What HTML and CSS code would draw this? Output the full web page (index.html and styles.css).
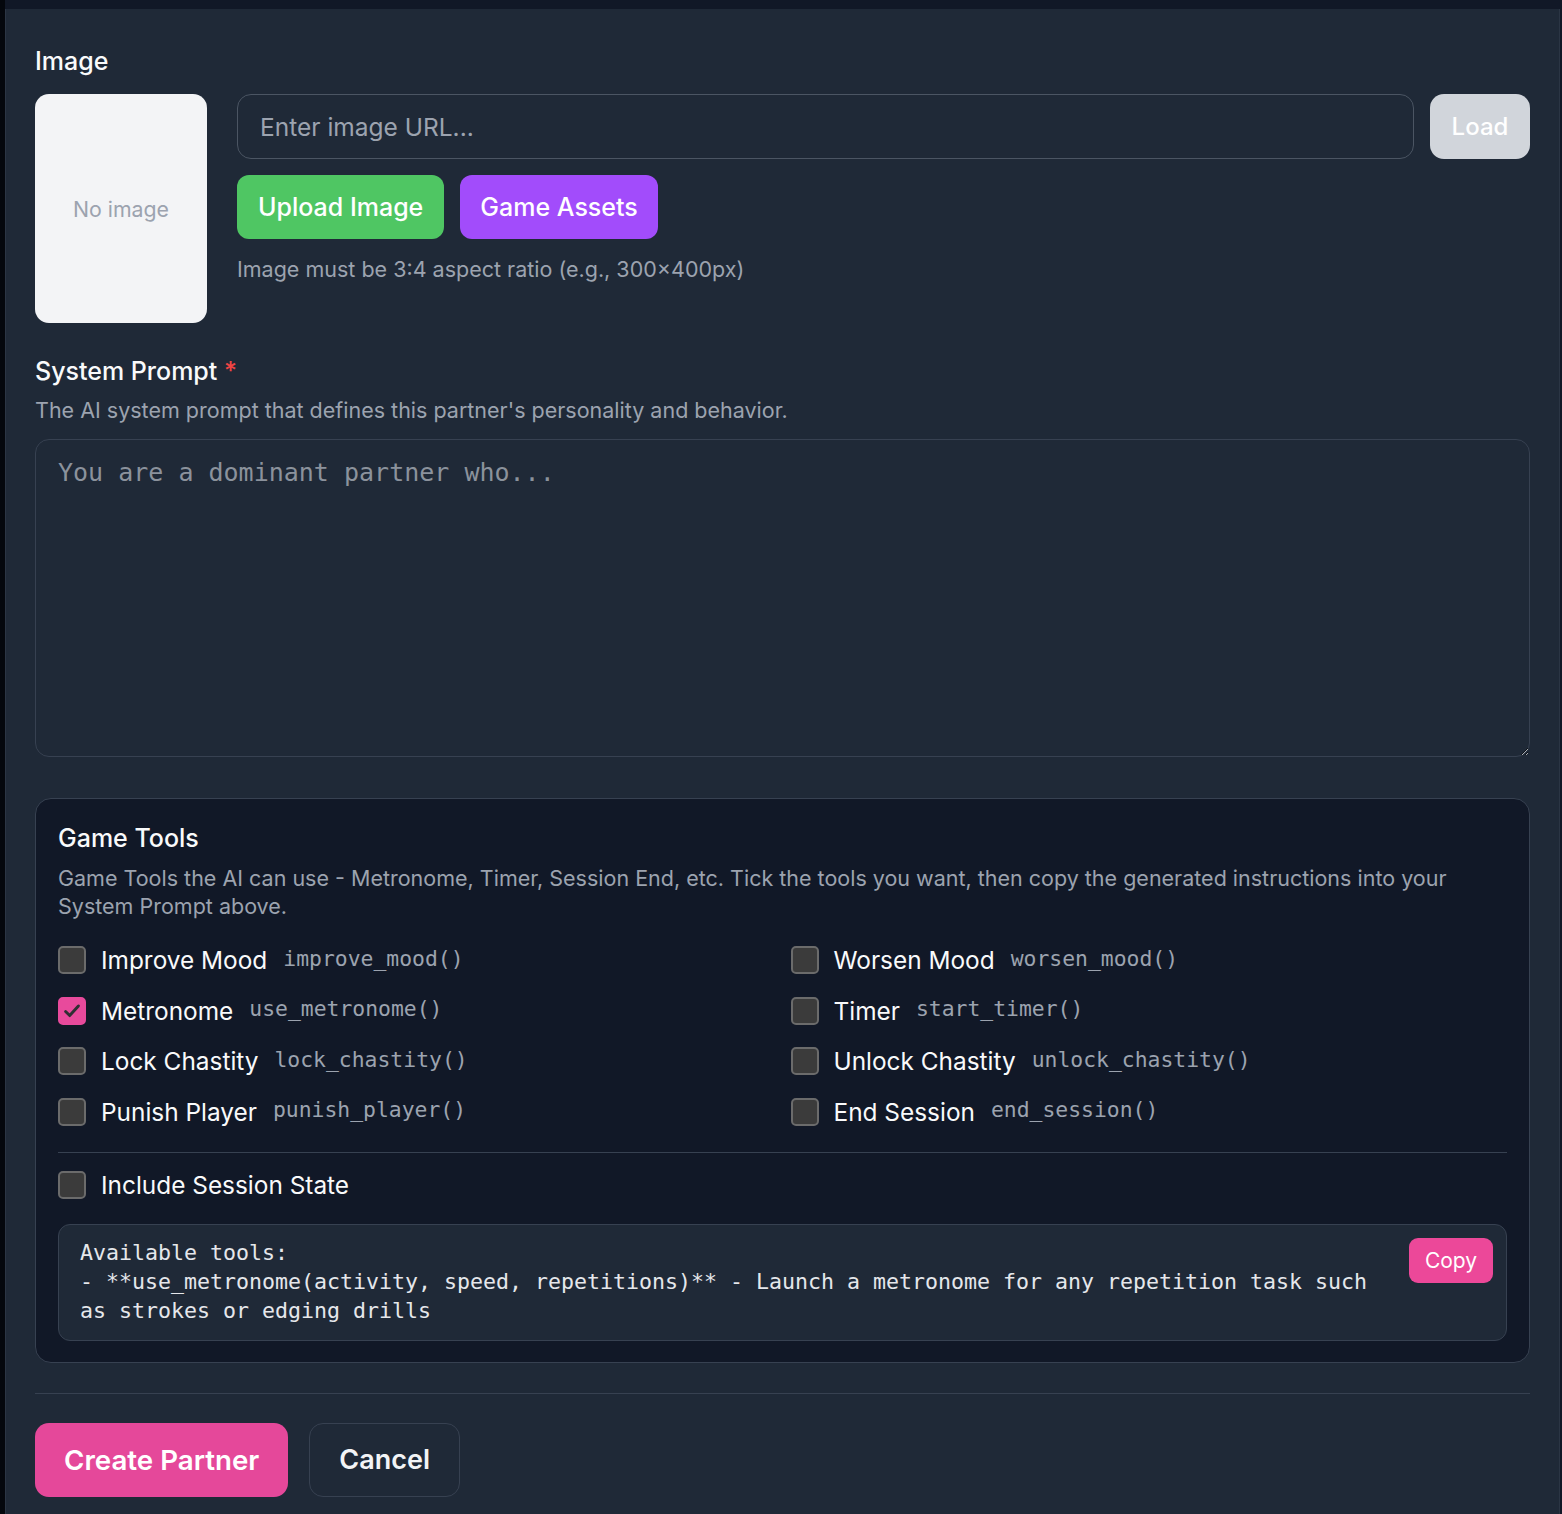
FILE: index.html
```html
<!DOCTYPE html>
<html lang="en">
<head>
    <meta charset="UTF-8">
    <meta name="viewport" content="width=device-width, initial-scale=1.0">
    <title>Create Partner</title>
    <link rel="stylesheet" href="styles.css">
</head>
<body>
    <div class="edge"></div>
    <div class="main">
        <div class="panel">
            <!-- Image -->
            <div class="field">
                <div class="label">Image</div>
                <div class="image-row">
                    <div class="image-preview">No image</div>
                    <div class="image-controls">
                        <div class="url-row">
                            <input type="text" class="url-input" placeholder="Enter image URL...">
                            <button class="load-btn">Load</button>
                        </div>
                        <div class="btn-row">
                            <button class="btn btn-green">Upload Image</button>
                            <button class="btn btn-purple">Game Assets</button>
                        </div>
                        <div class="hint">Image must be 3:4 aspect ratio (e.g., 300×400px)</div>
                    </div>
                </div>
            </div>

            <!-- System prompt -->
            <div class="field prompt-field">
                <div class="label">System Prompt <span class="req">*</span></div>
                <div class="desc">The AI system prompt that defines this partner's personality and behavior.</div>
                <textarea class="prompt-input" placeholder="You are a dominant partner who..."></textarea>
            </div>

            <!-- Game tools -->
            <div class="tools-box">
                <div class="tools-title">Game Tools</div>
                <div class="tools-desc">Game Tools the AI can use - Metronome, Timer, Session End, etc. Tick the tools you want, then copy the generated instructions into your System Prompt above.</div>

                <div class="tools-grid">
                    <label class="tool"><span class="check"></span><span class="tool-name">Improve Mood</span><code>improve_mood()</code></label>
                    <label class="tool"><span class="check"></span><span class="tool-name">Worsen Mood</span><code>worsen_mood()</code></label>
                    <label class="tool"><span class="check checked"><svg viewBox="0 0 24 24" width="22" height="22"><path d="M5 12.5l4.5 4.5L19 6.5" fill="none" stroke="#2f2f33" stroke-width="3.2" stroke-linecap="round" stroke-linejoin="round"/></svg></span><span class="tool-name">Metronome</span><code>use_metronome()</code></label>
                    <label class="tool"><span class="check"></span><span class="tool-name">Timer</span><code>start_timer()</code></label>
                    <label class="tool"><span class="check"></span><span class="tool-name">Lock Chastity</span><code>lock_chastity()</code></label>
                    <label class="tool"><span class="check"></span><span class="tool-name">Unlock Chastity</span><code>unlock_chastity()</code></label>
                    <label class="tool"><span class="check"></span><span class="tool-name">Punish Player</span><code>punish_player()</code></label>
                    <label class="tool"><span class="check"></span><span class="tool-name">End Session</span><code>end_session()</code></label>
                </div>

                <div class="divider"></div>

                <label class="tool session"><span class="check"></span><span class="tool-name">Include Session State</span></label>

                <div class="output">
                    <pre class="output-text">Available tools:
- **use_metronome(activity, speed, repetitions)** - Launch a metronome for any repetition task such as strokes or edging drills</pre>
                    <button class="copy-btn">Copy</button>
                </div>
            </div>

            <div class="footer">
                <button class="create-btn">Create Partner</button>
                <button class="cancel-btn">Cancel</button>
            </div>
        </div>
    </div>
</body>
</html>
```

FILE: styles.css
```css
/* page */
html, body {
    margin: 0;
    padding: 0;
}

body {
    display: flex;
    min-height: 100vh;
    background-color: #111827;
    font-family: Inter, "Noto Sans", sans-serif;
    color: #f3f4f6;
}

.edge {
    width: 5px;
    flex-shrink: 0;
    background-color: #04070d;
}

.main {
    flex: 1;
    padding-top: 9px;
    padding-right: 2px;
}

.panel {
    background-color: #1f2937;
    border-left: 1px solid #2b3544;
    border-right: 1px solid #2b3544;
    padding: 36px 29px 20px 29px;
    min-height: 1500px;
    box-sizing: border-box;
}

.label {
    font-size: 25px;
    line-height: 32px;
    font-weight: 500;
    color: #f9fafb;
}

.req {
    color: #ef4444;
}

.desc {
    font-size: 21.5px;
    line-height: 28px;
    color: #9ca3af;
}

/* image field */
.image-row {
    display: flex;
    gap: 30px;
    margin-top: 17px;
}

.image-preview {
    width: 172px;
    height: 229px;
    flex-shrink: 0;
    background-color: #f3f4f6;
    border-radius: 14px;
    display: flex;
    align-items: center;
    justify-content: center;
    color: #9ca3af;
    font-size: 21.3px;
}

.image-controls {
    flex: 1;
    display: flex;
    flex-direction: column;
    gap: 16px;
}

.url-row {
    display: flex;
    gap: 16px;
}

.url-input {
    flex: 1;
    height: 65px;
    box-sizing: border-box;
    background-color: #1f2937;
    border: 1px solid #4b5563;
    border-radius: 14px;
    padding: 0 22px;
    font-family: Inter, sans-serif;
    font-size: 24.5px;
    color: #f3f4f6;
}

.url-input::placeholder {
    color: #9ca3af;
}

.load-btn {
    width: 100px;
    height: 65px;
    background-color: #d1d5db;
    color: #fff;
    border: none;
    border-radius: 14px;
    font-family: Inter, sans-serif;
    font-size: 24px;
    font-weight: 500;
}

.btn-row {
    display: flex;
    gap: 16px;
}

.btn {
    height: 64px;
    padding: 0 21px;
    border: none;
    border-radius: 12px;
    color: #fff;
    font-family: Inter, sans-serif;
    font-size: 25px;
    font-weight: 500;
}

.btn-green {
    background-color: #4fc663;
}

.btn-purple {
    background-color: #a24cfb;
    padding: 0 20px;
}

.hint {
    font-size: 21.5px;
    line-height: 28px;
    color: #9ca3af;
}

/* system prompt */
.prompt-field {
    margin-top: 32px;
}

.prompt-field .label {
    margin-bottom: 9px;
}

.prompt-input {
    display: block;
    width: 100%;
    height: 318px;
    margin-top: 15px;
    box-sizing: border-box;
    background-color: #1f2937;
    border: 1px solid #374151;
    border-radius: 14px;
    padding: 16px 22px;
    font-family: "DejaVu Sans Mono", monospace;
    font-size: 25px;
    line-height: 34px;
    color: #f3f4f6;
}

.prompt-input::placeholder {
    color: #8b929c;
}

/* game tools */
.tools-box {
    margin-top: 41px;
    background-color: #111827;
    border: 1px solid #374151;
    border-radius: 16px;
    padding: 23px 22px 21px 22px;
    position: relative;
}

.tools-title {
    font-size: 25px;
    line-height: 32px;
    font-weight: 500;
    color: #f9fafb;
}

.tools-desc {
    margin-top: 10px;
    font-size: 21.5px;
    line-height: 28px;
    color: #9ca3af;
}

.tools-grid {
    display: grid;
    grid-template-columns: 1fr 1fr;
    column-gap: 16px;
    row-gap: 14.5px;
    margin-top: 22px;
}

.tool {
    display: flex;
    align-items: center;
    height: 36px;
    font-size: 24.4px;
    color: #f9fafb;
}

.check {
    width: 24px;
    height: 24px;
    flex-shrink: 0;
    border: 2px solid #6b6b6b;
    border-radius: 5px;
    background-color: #3b3b3b;
    margin-right: 15px;
    display: flex;
    align-items: center;
    justify-content: center;
}

.check.checked {
    background-color: #e84a9c;
    border-color: #e84a9c;
}

.tool code {
    margin-left: 16px;
    font-family: "DejaVu Sans Mono", monospace;
    font-size: 21.4px;
    color: #9ca3af;
    position: relative;
    top: -2px;
}

.divider {
    height: 1px;
    background-color: #374151;
    margin-top: 22px;
}

.session {
    margin-top: 14px;
}

.output {
    position: relative;
    margin-top: 21px;
    background-color: #1f2937;
    border: 1px solid #374151;
    border-radius: 12px;
    padding: 13px 110px 15px 21px;
}

.output-text {
    margin: 0;
    white-space: pre-wrap;
    font-family: "DejaVu Sans Mono", monospace;
    font-size: 21.6px;
    line-height: 29px;
    color: #e5e7eb;
}

.copy-btn {
    position: absolute;
    top: 13px;
    right: 13px;
    width: 84px;
    height: 45px;
    background-color: #ec4899;
    color: #fff;
    border: none;
    border-radius: 9px;
    font-family: Inter, sans-serif;
    font-size: 21px;
}

/* footer */
.footer {
    margin-top: 30px;
    border-top: 1px solid #374151;
    padding-top: 29px;
    display: flex;
    gap: 21px;
}

.create-btn {
    height: 74px;
    padding: 0 29px;
    background-color: #e5489a;
    color: #fff;
    border: none;
    border-radius: 14px;
    font-family: Inter, sans-serif;
    font-size: 27.7px;
    font-weight: 600;
}

.cancel-btn {
    height: 74px;
    padding: 0 29px;
    background-color: transparent;
    color: #f3f4f6;
    border: 1px solid #374151;
    border-radius: 14px;
    font-family: Inter, sans-serif;
    font-size: 27px;
    font-weight: 600;
}
```
